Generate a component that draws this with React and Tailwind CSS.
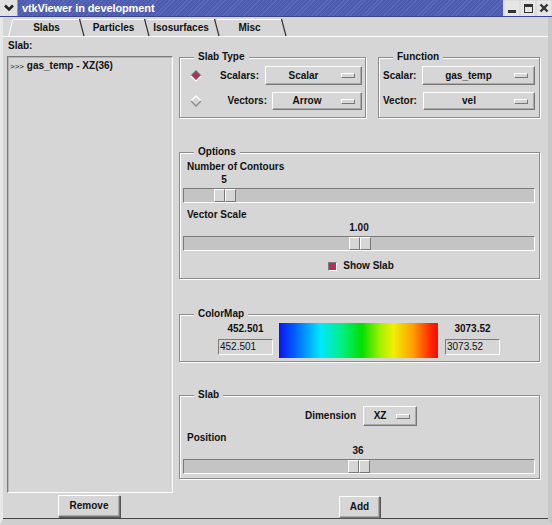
import React from 'react';

const raised = "border border-t-white border-l-white border-r-[#777] border-b-[#777]";
const sunken = "border border-t-[#7a7a7a] border-l-[#7a7a7a] border-r-white border-b-white";

function Group({ title, className, children }) {
  return (
    <div className={`relative border border-[#8c8c8c] shadow-[inset_1px_1px_0_#fff,1px_1px_0_#fff] ${className}`}>
      <span className="absolute -top-[7px] left-[14px] bg-[#d6d6d6] px-[4px] leading-[12px]">{title}</span>
      {children}
    </div>
  );
}

function OptionMenu({ value, className }) {
  return (
    <div className={`flex items-center ${raised} shadow-[inset_-1px_-1px_0_#a9a9a9] ${className}`}>
      <span className="flex-1 text-center leading-[12px]">{value}</span>
      <span className={`w-[14px] h-[5px] mr-[6px] ${raised}`} />
    </div>
  );
}

function Radio({ on }) {
  return (
    <svg width="12" height="12" viewBox="0 0 12 12">
      <polygon points="6,1 11,6 6,11 1,6" fill={on ? '#b03060' : '#d6d6d6'} />
      <polyline points="1,6 6,1 11,6" fill="none" stroke={on ? '#6a6a6a' : '#ffffff'} strokeWidth="1.3" />
      <polyline points="1,6 6,11 11,6" fill="none" stroke={on ? '#ffffff' : '#8a8a8a'} strokeWidth="1.3" />
    </svg>
  );
}

function Scale({ label, value, frac, labelGap = 'mt-[8px]' }) {
  const left = Math.round(frac * 328);
  return (
    <div className="flex flex-col">
      <div className={`${labelGap} pl-[4px] leading-[12px]`}>{label}</div>
      <div className="mt-[1px] h-[12px] leading-[12px]">
        <div className="w-[22px] text-center" style={{ marginLeft: left }}>{value}</div>
      </div>
      <div className={`mt-[2px] h-[15px] w-[352px] bg-[#c4c4c4] ${sunken}`}>
        <div className="flex h-[13px] w-[22px]" style={{ marginLeft: left }}>
          <div className={`w-[11px] h-full bg-[#d6d6d6] ${raised}`} />
          <div className={`w-[11px] h-full bg-[#d6d6d6] ${raised}`} />
        </div>
      </div>
    </div>
  );
}

function Tab({ label, width, first }) {
  return (
    <div className="flex h-[20px]">
      {first && (
        <svg width="5" height="20" viewBox="0 0 5 20">
          <line x1="0.5" y1="20" x2="4.5" y2="3" stroke="#ffffff" strokeWidth="1" />
        </svg>
      )}
      <div className="mt-[2px] border-t border-white flex items-center justify-center leading-[12px] pb-[1px]" style={{ width }}>
        {label}
      </div>
      <svg width="6" height="20" viewBox="0 0 6 20" className="-ml-[1px] -mr-[3px]">
        <line x1="0.5" y1="2" x2="5" y2="19" stroke="#333" strokeWidth="1.2" />
      </svg>
    </div>
  );
}

function Button({ label, className }) {
  return (
    <div className={`flex items-center justify-center bg-[#d6d6d6] ${raised} shadow-[inset_-1px_-1px_0_#a9a9a9,1px_1px_0_#555] leading-[12px] ${className}`}>
      {label}
    </div>
  );
}

export default function App() {
  return (
    <div className="w-[552px] h-[525px] bg-[#d6d6d6] overflow-hidden flex flex-col font-['Liberation_Sans',Arial,sans-serif] text-[10px] font-bold text-[#111]">
      {/* Title bar */}
      <div className="h-[17px] flex items-stretch bg-[repeating-linear-gradient(135deg,#5c6abb_0px,#5c6abb_1px,#4d5bae_1px,#4d5bae_3px)] border-b border-[#3a4590]">
        <div className="w-[18px] bg-[#e2e2e2] border-r border-[#999] flex items-center justify-center">
          <svg width="12" height="10" viewBox="0 0 12 10">
            <polyline points="2,2.5 6,6.5 10,2.5" fill="none" stroke="#222" strokeWidth="2.6" />
          </svg>
        </div>
        <div className="ml-[4px] flex-1 text-white text-[11px] leading-[16px] tracking-[-0.1px]">vtkViewer in development</div>
        <div className="flex gap-[2px] bg-[#dcdcdc] pl-[2px] pr-[1px] items-center">
          <div className="w-[14px] h-[15px] bg-[#e6e6e6] flex items-end justify-center pb-[3px]">
            <div className="w-[8px] h-[3px] bg-[#333]" />
          </div>
          <div className="w-[14px] h-[15px] bg-[#e6e6e6] flex items-center justify-center">
            <div className="w-[9px] h-[9px] border border-[#333] border-t-[3px]" />
          </div>
          <div className="w-[14px] h-[15px] bg-[#e6e6e6] flex items-center justify-center">
            <svg width="10" height="10" viewBox="0 0 10 10">
              <path d="M1.5 1.5 L8.5 8.5 M8.5 1.5 L1.5 8.5" stroke="#333" strokeWidth="2.4" />
            </svg>
          </div>
        </div>
      </div>

      {/* Window body */}
      <div className="flex-1 flex flex-col border-l-[3px] border-l-[#e8e8e8] border-r-[4px] border-r-[#c8c8c8] border-b-[6px] border-b-[#cfcfcf]">
        {/* Tabs */}
        <div className="flex h-[20px] pl-[5px] border-b border-white">
          <Tab label="Slabs" width={67} first />
          <Tab label="Particles" width={63} />
          <Tab label="Isosurfaces" width={68} />
          <Tab label="Misc" width={65} />
        </div>

        {/* Content */}
        <div className="flex-1 flex pl-[4px] border-b border-[#444]">
          {/* Left column */}
          <div className="w-[166px] flex flex-col">
            <div className="pt-[3px] pl-[1px] leading-[12px]">Slab:</div>
            <div className={`mt-[4px] h-[437px] ${sunken} shadow-[inset_1px_1px_0_#b5b5b5] pl-[2px] pt-[3px]`}>
              <div className="leading-[12px]"><span className="font-normal text-[8px]">&gt;&gt;&gt;</span> gas_temp - XZ(36)</div>
            </div>
            <Button label="Remove" className="mt-[2px] ml-[51px] w-[62px] h-[22px]" />
          </div>

          {/* Right column */}
          <div className="ml-[6px] w-[361px] flex flex-col">
            <div className="mt-[20px] flex h-[61px]">
              <Group title="Slab Type" className="w-[187px] h-[61px]">
                <div className="flex items-center pl-[10px] pr-[3px] mt-[8px] h-[19px]">
                  <Radio on />
                  <span className="ml-auto leading-[12px]">Scalars:</span>
                  <OptionMenu value="Scalar" className="ml-[6px] w-[97px] h-[19px]" />
                </div>
                <div className="flex items-center pl-[10px] pr-[3px] mt-[7px] h-[18px]">
                  <Radio />
                  <span className="ml-auto leading-[12px]">Vectors:</span>
                  <OptionMenu value="Arrow" className="ml-[5px] w-[90px] h-[18px]" />
                </div>
              </Group>
              <Group title="Function" className="ml-[12px] w-[162px] h-[61px]">
                <div className="flex items-center pl-[4px] pr-[4px] mt-[8px] h-[19px]">
                  <span className="leading-[12px]">Scalar:</span>
                  <OptionMenu value="gas_temp" className="ml-auto w-[113px] h-[19px]" />
                </div>
                <div className="flex items-center pl-[4px] pr-[4px] mt-[7px] h-[18px]">
                  <span className="leading-[12px]">Vector:</span>
                  <OptionMenu value="vel" className="ml-auto w-[112px] h-[18px]" />
                </div>
              </Group>
            </div>

            <Group title="Options" className="mt-[34px] h-[127px] pl-[3px]">
              <Scale label="Number of Contours" value="5" frac={0.091} />
              <Scale label="Vector Scale" value="1.00" frac={0.503} labelGap="mt-[6px]" />
              <div className="mt-[9px] flex items-center justify-center leading-[12px]">
                <span className={`w-[9px] h-[9px] bg-[#b03060] ${sunken}`} />
                <span className="ml-[6px]">Show Slab</span>
              </div>
            </Group>

            <Group title="ColorMap" className="mt-[35px] h-[48px] flex items-start pl-[38px]">
              <div className="flex flex-col items-center w-[55px]">
                <div className="mt-[8px] leading-[12px]">452.501</div>
                <div className={`mt-[4px] w-[55px] h-[16px] ${sunken} font-normal leading-[14px] pl-[1px]`}>452.501</div>
              </div>
              <div className="ml-[6px] mt-[8px] w-[159px] h-[35px] bg-[linear-gradient(to_right,#0a14f0_0%,#0060ff_10%,#00e8ff_26%,#00f080_40%,#00e000_52%,#a8f000_64%,#f0f000_72%,#ffa000_84%,#ff2000_96%,#f01000_100%)]" />
              <div className="ml-[7px] flex flex-col items-center w-[55px]">
                <div className="mt-[8px] leading-[12px]">3073.52</div>
                <div className={`mt-[4px] w-[55px] h-[16px] ${sunken} font-normal leading-[14px] pl-[1px]`}>3073.52</div>
              </div>
            </Group>

            <Group title="Slab" className="mt-[33px] h-[84px] pl-[3px]">
              <div className="mt-[10px] flex items-center justify-center">
                <span className="leading-[12px]">Dimension</span>
                <OptionMenu value="XZ" className="ml-[7px] w-[54px] h-[20px]" />
              </div>
              <Scale label="Position" value="36" frac={0.5} labelGap="mt-[6px]" />
            </Group>

            <div className="flex justify-center">
              <Button label="Add" className="mt-[17px] w-[41px] h-[22px]" />
            </div>
          </div>
        </div>
      </div>
    </div>
  );
}
